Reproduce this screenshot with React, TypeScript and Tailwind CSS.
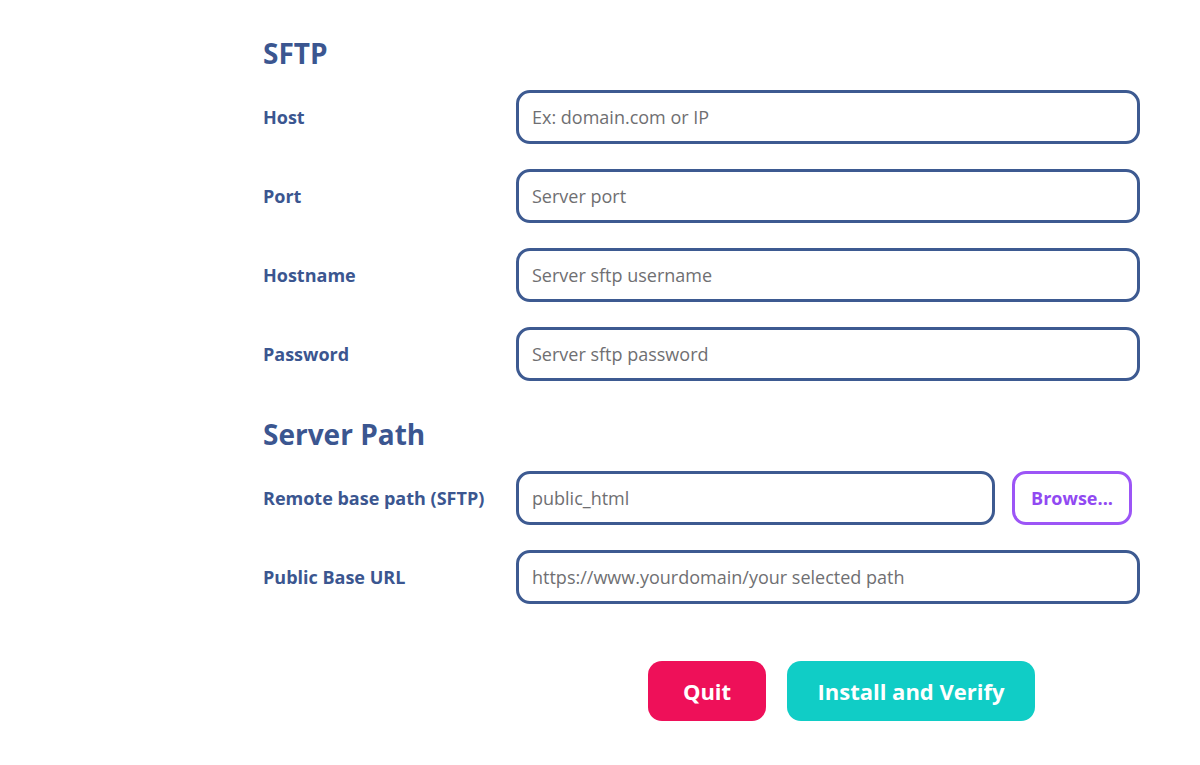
import React from "react";

const labelCls = "w-[253px] shrink-0 text-[18px] font-bold text-[#3b5690]";
const inputCls =
  "h-[54px] rounded-[14px] border-[3px] border-[#3d5a91] bg-white px-[13px] text-[18px] text-[#555] placeholder:text-[#6f6f72] outline-none";

function Field({ label, placeholder, defaultValue }: { label: string; placeholder?: string; defaultValue?: string }) {
  return (
    <div className="flex items-center">
      <span className={labelCls}>{label}</span>
      <input className={`${inputCls} w-[624px]`} placeholder={placeholder} defaultValue={defaultValue} />
    </div>
  );
}

export default function App() {
  return (
    <div
      className="min-h-[765px] w-[1200px] bg-white pl-[263px] pt-[36px]"
      style={{ fontFamily: '"Open Sans", "Noto Sans", sans-serif' }}
    >
      <h2 className="text-[28px] leading-[34px] font-bold text-[#3b5690]">SFTP</h2>
      <div className="mt-[20px] flex flex-col gap-[25px]">
        <Field label="Host" placeholder="Ex: domain.com or IP" />
        <Field label="Port" placeholder="Server port" />
        <Field label="Hostname" placeholder="Server sftp username" />
        <Field label="Password" placeholder="Server sftp password" />
      </div>

      <h2 className="mt-[36px] text-[28px] leading-[34px] font-bold text-[#3b5690]">Server Path</h2>
      <div className="mt-[20px] flex flex-col gap-[25px]">
        <div className="flex items-center">
          <span className={labelCls}>Remote base path (SFTP)</span>
          <input className={`${inputCls} w-[479px]`} placeholder="public_html" />
          <button className="ml-[17px] h-[54px] w-[120px] rounded-[14px] border-[3px] border-[#9c55f6] text-[18px] font-bold text-[#9149f2]">
            Browse...
          </button>
        </div>
        <Field label="Public Base URL" placeholder="https://www.yourdomain/your selected path" />
      </div>

      <div className="mt-[57px] ml-[385px] flex gap-[21px]">
        <button className="h-[60px] w-[118px] rounded-[14px] bg-[#ee1059] text-[22px] font-bold text-white">Quit</button>
        <button className="h-[60px] w-[248px] rounded-[14px] bg-[#10cdc6] text-[22px] font-bold text-white">
          Install and Verify
        </button>
      </div>
    </div>
  );
}
